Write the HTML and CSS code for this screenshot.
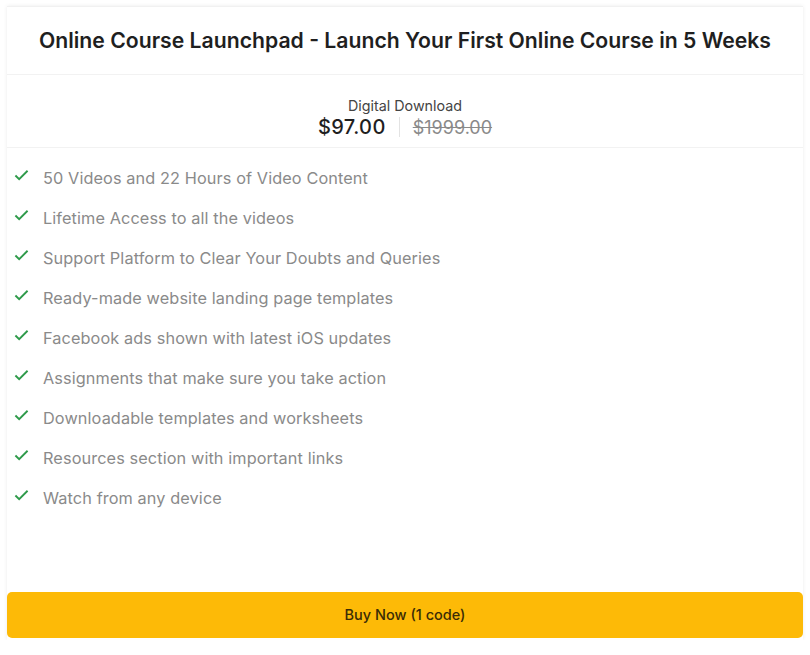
FILE: index.html
```html
<!DOCTYPE html>
<html>
<head>
<meta charset="utf-8">
<link rel="stylesheet" href="styles.css">
</head>
<body>
<div class="card">
  <div class="head">
    <h1 class="title">Online Course Launchpad - Launch Your First Online Course in 5 Weeks</h1>
  </div>
  <div class="pricing">
    <div class="kind">Digital Download</div>
    <div class="prices">
      <span class="price">$97.00</span>
      <span class="sep"></span>
      <span class="old">$1999.00</span>
    </div>
  </div>
  <ul class="features">
    <li><svg class="check" viewBox="0 0 16 12"><path d="M1.5 6.5 L5.5 10.5 L14.5 1.5"/></svg><span>50 Videos and 22 Hours of Video Content</span></li>
    <li><svg class="check" viewBox="0 0 16 12"><path d="M1.5 6.5 L5.5 10.5 L14.5 1.5"/></svg><span>Lifetime Access to all the videos</span></li>
    <li><svg class="check" viewBox="0 0 16 12"><path d="M1.5 6.5 L5.5 10.5 L14.5 1.5"/></svg><span>Support Platform to Clear Your Doubts and Queries</span></li>
    <li><svg class="check" viewBox="0 0 16 12"><path d="M1.5 6.5 L5.5 10.5 L14.5 1.5"/></svg><span>Ready-made website landing page templates</span></li>
    <li><svg class="check" viewBox="0 0 16 12"><path d="M1.5 6.5 L5.5 10.5 L14.5 1.5"/></svg><span>Facebook ads shown with latest iOS updates</span></li>
    <li><svg class="check" viewBox="0 0 16 12"><path d="M1.5 6.5 L5.5 10.5 L14.5 1.5"/></svg><span>Assignments that make sure you take action</span></li>
    <li><svg class="check" viewBox="0 0 16 12"><path d="M1.5 6.5 L5.5 10.5 L14.5 1.5"/></svg><span>Downloadable templates and worksheets</span></li>
    <li><svg class="check" viewBox="0 0 16 12"><path d="M1.5 6.5 L5.5 10.5 L14.5 1.5"/></svg><span>Resources section with important links</span></li>
    <li><svg class="check" viewBox="0 0 16 12"><path d="M1.5 6.5 L5.5 10.5 L14.5 1.5"/></svg><span>Watch from any device</span></li>
  </ul>
  <button class="buy">Buy Now (1 code)</button>
</div>
</body>
</html>
```
FILE: styles.css
```css
* { box-sizing: border-box; }
html, body { margin: 0; padding: 0; background: #ffffff; }
body { font-family: "Inter", "Noto Sans", sans-serif; }
.card {
  margin: 6px 7px 0 7px;
  width: 796px;
  height: 634px;
  background: #fff;
  border-top: 1px solid #f1f1f1;
  box-shadow: 0 0 4px rgba(0,0,0,0.08);
  display: flex;
  flex-direction: column;
}
.head {
  height: 68px;
  padding-bottom: 2px;
  display: flex;
  align-items: center;
  justify-content: center;
  border-bottom: 1px solid #f2f2f2;
}
.title {
  margin: 0;
  font-size: 21.2px;
  font-weight: 600;
  color: #1f1f1f;
}
.pricing {
  height: 73px;
  padding-top: 14px;
  border-bottom: 1px solid #f2f2f2;
  display: flex;
  flex-direction: column;
  align-items: center;
  justify-content: center;
  gap: 1px;
}
.kind { font-size: 14.3px; color: #444; }
.prices { display: flex; align-items: center; gap: 13px; }
.price { font-size: 20px; font-weight: 500; color: #1f1f1f; letter-spacing: 0.4px; }
.sep { width: 1px; height: 20px; background: #e3e3e3; }
.old { font-size: 18px; color: #8a8a8a; text-decoration: line-through; }
.features {
  list-style: none;
  margin: 0;
  padding: 10px 0 0 7px;
  flex: 1;
}
.features li {
  height: 40px;
  display: flex;
  align-items: center;
  font-size: 16.3px;
  letter-spacing: 0.1px;
  color: #8a8a8a;
}
.check {
  width: 15px;
  height: 12px;
  margin-right: 14px;
  margin-top: -6px;
  fill: none;
  stroke: #2e9a4a;
  stroke-width: 2;
}
.buy {
  height: 46px;
  margin: 0 0 2px 0;
  padding-bottom: 2px;
  border: none;
  border-radius: 5px;
  background: #fdba07;
  color: #3a2c06;
  font-family: inherit;
  font-size: 14.5px;
  font-weight: 500;
}
```
